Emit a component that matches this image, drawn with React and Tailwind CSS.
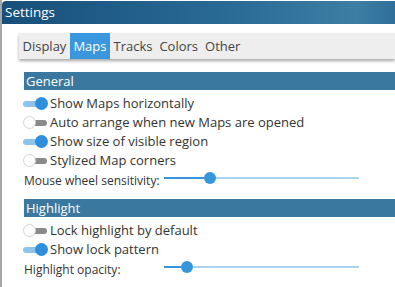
import React, { useState } from 'react';


const Toggle = ({ on }) =>
{
  // track with the knob laid over one end
  return (
    <div className={`flex items-center w-[25px] h-[14px] shrink-0 ${on ? 'justify-end' : 'justify-start'}`}>
      {on ? (
        <>
          <div className="w-[19px] h-[6px] rounded-l-full bg-[#8cc4ee] -mr-[4px]" />
          <div className="w-[13px] h-[13px] rounded-full bg-[#2f8fdc] shrink-0" />
        </>
      ) : (
        <>
          <div className="w-[13px] h-[13px] rounded-full bg-white border border-[#d4d4d4] shrink-0 z-10" />
          <div className="w-[15px] h-[6px] rounded-r-full bg-[#8a8a8a] -ml-[4px]" />
        </>
      )}
    </div>
  );
};


const CheckRow = ({ on, label }) =>
{
  return (
    <div className="flex items-center h-[19px] pl-[21px] gap-[2px]">
      <Toggle on={on} />
      <span className="whitespace-nowrap">{label}</span>
    </div>
  );
};


const SliderRow = ({ label, value }) =>
{
  return (
    <div className="flex items-center h-[22px] pl-[22px]">
      <span className="w-[140px] shrink-0 whitespace-nowrap text-[12px]">{label}</span>
      <div className="flex items-center w-[195px] h-[12px] -mt-[6px]">
        <div className="h-[2px] bg-[#3596dc]" style={{ width: value - 6 }} />
        <div className="w-[12px] h-[12px] rounded-full bg-[#3596dc] shrink-0" />
        <div className="h-[2px] bg-[#a8d4f0] flex-1" />
      </div>
    </div>
  );
};


const SectionHeader = ({ title }) =>
{
  return (
    <div className="ml-[22px] h-[18px] bg-[#3b78a0] text-white pl-[2px] leading-[18px]">
      {title}
    </div>
  );
};


const App = () =>
{
  const [tab, setTab] = useState('Maps');
  const tabs = ['Display', 'Maps', 'Tracks', 'Colors', 'Other'];

  return (
    <div
      className="w-[395px] h-[287px] bg-white overflow-hidden text-[13px] text-[#333] border-l-2 border-[#a6a6a6]"
      style={{ fontFamily: '"Open Sans", "Noto Sans", sans-serif' }}
    >
      <div className="mt-[1px] h-[23px] rounded-tl-[4px] bg-[linear-gradient(90deg,#174f7a_0%,#2a6c96_60%,#3d7ea3_90%,#2f6f99_100%)] text-white text-[13.5px] pl-[3px] leading-[23px]">
        Settings
      </div>

      <div className="mt-[9px] ml-[17px] h-[26px] bg-[#eeeeee] flex shadow-[0_2px_3px_rgba(0,0,0,0.35)]">
        {tabs.map((t) => (
          <button
            key={t}
            onClick={() => setTab(t)}
            className={`px-[3.5px] h-full leading-[26px] ${tab === t ? 'bg-[#3a96dd] text-white' : 'text-[#444]'}`}
          >
            {t}
          </button>
        ))}
      </div>

      <div className="mt-[13px]">
        <SectionHeader title="General" />
        <div className="pt-[4px]">
          <CheckRow on label="Show Maps horizontally" />
          <CheckRow label="Auto arrange when new Maps are opened" />
          <CheckRow on label="Show size of visible region" />
          <CheckRow label="Stylized Map corners" />
          <SliderRow label="Mouse wheel sensitivity:" value={46} />
        </div>
      </div>

      <div className="mt-[7px]">
        <SectionHeader title="Highlight" />
        <div className="pt-[4px]">
          <CheckRow label="Lock highlight by default" />
          <CheckRow on label="Show lock pattern" />
          <SliderRow label="Highlight opacity:" value={23} />
        </div>
      </div>
    </div>
  );
};


export default App;
